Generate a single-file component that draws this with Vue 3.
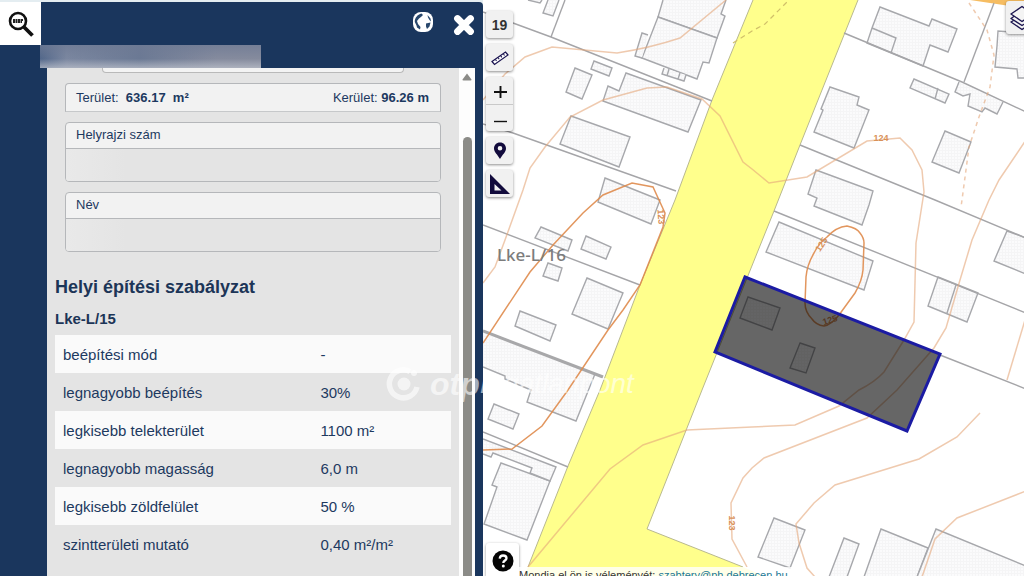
<script setup>
const rules = [
  ['beépítési mód', '-'],
  ['legnagyobb beépítés', '30%'],
  ['legkisebb telekterület', '1100 m²'],
  ['legnagyobb magasság', '6,0 m'],
  ['legkisebb zöldfelület', '50 %'],
  ['szintterületi mutató', '0,40 m²/m²'],
]

const fields = [
  { id: 'parcel-number', label: 'Helyrajzi szám' },
  { id: 'owner-name', label: 'Név' },
]

const buildings = [
  'M528 0L540 3L542 0', 'M548 0L543 13L553 16L559 0',
  'M663 0L658 17L717 38L725 16L721 14L726 0', 'M658 17L642 58L697 79L703 62L709 63L717 38Z',
  'M648 35L642 33L635 56L642 58', 'M664 68L662 74L684 81L686 75M669 69L667 76M680 73L678 79',
  'M594 61L612 68L609 76L591 69Z', 'M575 68L592 75L582 99L566 92Z',
  'M626 73L701 100L688 132L603 101L608 86L619 91Z', 'M571 116L630 137L619 167L560 144Z',
  'M605 178L660 200L651 224L598 202Z', 'M541 227L572 240L568 251L535 238Z',
  'M586 236L611 247L606 259L581 249Z', 'M548 263L562 268L558 281L543 276Z',
  'M587 278L623 293L608 329L572 314Z', 'M520 311L556 325L550 341L515 326Z',
  'M483 331L595 374L576 421L527 402L531 390L505 379L505 376L483 367',
  'M494 404L519 414L513 429L488 419Z', 'M501 463L550 481L527 540L484 524L497 487L492 485Z',
  'M483 439L556 467L550 481L530 473L532 468L493 453L491 457L483 454',
  'M880 7L929 26L932 19L957 29L948 52L930 45L923 66L867 43L872 28Z M872 28L896 38L891 53',
  'M1026 33L998 31L997 46L995 67L1017 69L1018 78H1026', 'M914 79L949 94L945 103L910 88Z M938 88L935 99',
  'M959 82L955 92L963 96L970 94L968 106L982 112L985 108L997 114L1003 102',
  'M830 87L859 97L857 105L869 110L854 148L814 132L823 110L821 109Z',
  'M945 131L971 142L959 173L932 162Z', 'M816 170L873 191L869 205L862 225L814 206L817 198L808 194Z',
  'M779 222L873 261L864 290L766 252Z', 'M938 277L978 293L967 322L928 306Z M956 285L947 313',
  'M1026 238L1007 231L994 261L1026 274', 'M748 297L780 308L772 330L740 318Z',
  'M800 343L815 348L806 373L790 368Z', 'M774 518L805 530L790 568L758 557Z',
  'M829 577L844 538L859 544L847 577', 'M864 577L881 529L928 548L917 577', 'M917 577L936 529L1026 566V577',
]

const boundaries = [
  'M483 12L513 23L551 37L712 101', 'M565 0L551 37', 'M483 124L513 133L676 191', 'M483 225L640 285',
  'M483 432L568 467', 'M844 33L962 82L1026 112', 'M994 3L964 82', 'M800 145L935 200L1026 238',
  'M774 211L1026 313', 'M940 355L1026 389',
]

const contours = [
  'M726 0L680 38Q650 48 617 53L552 47L525 57L505 74L483 100',
  'M483 283L495 267L505 240L523 190L530 168L545 147L570 117L603 100L647 88L667 87L702 99L720 116L743 162L752 169L769 183L807 177L867 141L900 138L912 150L922 170L924 192L916 243L914 322L904 340L884 372Q875 382 859 390L839 406L795 425L752 427L687 430L643 445L610 469L528 567',
  'M1026 140L999 180L989 200L972 240L960 280L946 328L934 348L897 390L867 418L764 458L752 468L743 478L731 503L732 539L747 567',
  'M980 413L957 437L919 459L835 485L814 503L796 524L799 543L807 568L815 577',
  'M1026 491L957 518L935 539L922 577', 'M1025 320L1007 380',
]

const strongContours = [
  'M483 343L530 272L553 245L583 213L603 195L632 183L653 187L659 200L665 213L663 227L640 285L623 310L608 330L568 390L542 426L512 449L483 450',
  'M847 226Q857 228 860 233Q864 238 864 243L863 270Q862 281 855 293L839 315Q831 325 824 326Q816 325 812 319Q805 312 805 303L806 277Q807 265 814 253Q819 243 827 237Q836 227 847 226Z',
]
</script>

<template>
  <div class="app">
    <aside class="panel">
      <header class="panel-head">
        <button class="search" aria-label="Keresés">
          <svg viewBox="0 0 28 28">
            <circle cx="11" cy="11" r="8" fill="#fff" stroke="#111" stroke-width="2.600" />
            <path d="M17 17L25.500 25.500" stroke="#111" stroke-width="3.800" />
            <path d="M6 9h2v4h-2zM8.500 9h2v4h-2zM11 9h2v4h-2zM13.500 9h2.500v2h-1v2h-1.500z" fill="#222" />
          </svg>
        </button>
        <div class="title-mask"></div>
        <div class="head-actions">
          <button class="globe" aria-label="Térkép">
            <svg viewBox="0 0 22 22">
              <rect x="1" y="1" width="20" height="20" rx="8" fill="#fff" />
              <path d="M9.500 2.500C5.500 3.500 2.500 7 2.800 11L4.500 14.500L5 16.500L8 18.500L8.500 16L6 13L5 10L7 7.500L9.500 5.500L11 4ZM15.500 4L18.500 7.500L19 10.500L17.500 9L16 6.500ZM14 12.500L18.500 11.500L17.500 15.500L15 18L14 15.500Z" fill="#28476c" />
            </svg>
          </button>
          <button class="close" aria-label="Bezárás">
            <svg viewBox="0 0 22 22"><path d="M4.500 4.500L17.500 17.500M17.500 4.500L4.500 17.500" stroke="#fff" stroke-width="6.800" stroke-linecap="round" /></svg>
          </button>
        </div>
      </header>

      <div class="panel-body">
        <main class="content">
          <div class="cut-box"></div>
          <section class="measures">
            <span>Terület:&nbsp; <b>636.17 &nbsp;m²</b></span>
            <span>Kerület: <b>96.26 m</b></span>
          </section>
          <section v-for="f in fields" :key="f.id" class="field">
            <label :for="f.id">{{ f.label }}</label>
            <div class="value">
              <input :id="f.id" type="text" readonly />
            </div>
          </section>
          <h2>Helyi építési szabályzat</h2>
          <h3>Lke-L/15</h3>
          <table>
            <tbody>
              <tr v-for="r in rules" :key="r[0]">
                <th scope="row">{{ r[0] }}</th>
                <td>{{ r[1] }}</td>
              </tr>
            </tbody>
          </table>
        </main>
        <div class="scrollbar">
          <svg viewBox="0 0 10 8"><path d="M5 0.500L9.500 6.500Q9.700 7.500 8.500 7.500H1.500Q0.300 7.500 0.500 6.500Z" fill="#8b8b87" /></svg>
          <div class="thumb"></div>
        </div>
      </div>
    </aside>

    <section class="map">
      <svg class="canvas" viewBox="483 0 541 576" preserveAspectRatio="xMinYMin slice">
        <defs>
          <pattern id="hatch" width="3" height="3" patternUnits="userSpaceOnUse">
            <rect width="3" height="3" fill="#fbfbfc" />
            <path d="M0 .5H3M.5 0V3" stroke="#f5f5f6" stroke-width="1" />
          </pattern>
        </defs>
        <path d="M753 0H858L800 145L774 211L702 390L647 529L743 567L766 577H524L528 567L568 466L600 390L640 285L675 200L712 100Z" fill="#ffff8c" />
        <path d="M753 0L712 100L675 200L640 285L600 390L568 466L528 567M858 0L800 145L774 211L702 390L647 529L743 567" class="road-edge" />
        <path d="M970 0L1010 6H1026V0Z" fill="#f6bd62" />
        <path v-for="d in buildings" :key="d" :d="d" class="building" />
        <path v-for="d in boundaries" :key="d" :d="d" class="boundary" />
        <path d="M483 331L603 377" class="thick" />
        <path v-for="d in contours" :key="d" :d="d" class="contour" />
        <path v-for="d in strongContours" :key="d" :d="d" class="contour strong" />
        <path d="M969 3L987 30L994 55L990 87L979 117L969 147L962 200L961 207" class="contour dashed" />
        <path d="M733 43L752 31L765 24L788 1" class="track" />
        <g class="height">
          <text x="881" y="141">124</text>
          <text transform="translate(658 217) rotate(86)">123</text>
          <text transform="translate(824 246) rotate(-58)">125</text>
          <text transform="translate(831 323) rotate(-18)">125</text>
          <text transform="translate(729 523) rotate(90)">123</text>
        </g>
        <text x="497" y="261" class="zone">Lke-L/16</text>
        <path d="M745 277L940 354L907 431L715 352Z" class="parcel" />
      </svg>

      <nav class="tools">
        <button class="tool level">19</button>
        <button class="tool" aria-label="Mérés">
          <svg viewBox="0 0 20 20"><path d="M2 13.500L15.500 4L18 7L4.500 16.500Z" fill="#fff" stroke="#19124f" stroke-width="1.200" /><path d="M5.500 11.500L6.500 13M8.200 9.700L9.200 11.200M10.800 7.900L11.800 9.400M13.500 6L14.500 7.500" stroke="#19124f" stroke-width="1.100" /></svg>
        </button>
        <div class="zoom">
          <button aria-label="Nagyítás"><svg viewBox="0 0 20 20"><path d="M4 11H17M10.500 5V17" stroke="#111" stroke-width="1.900" /></svg></button>
          <button aria-label="Kicsinyítés"><svg viewBox="0 0 20 20"><path d="M4 13.500H17" stroke="#111" stroke-width="1.400" /></svg></button>
        </div>
        <button class="tool" aria-label="Hely">
          <svg viewBox="0 0 20 20"><path d="M10 1.500C6.300 1.500 4 4.200 4 7.500C4 11 7.500 13.500 10 18C12.500 13.500 16 11 16 7.500C16 4.200 13.700 1.500 10 1.500ZM10 5A2.300 2.300 0 1 1 10 9.600A2.300 2.300 0 1 1 10 5Z" fill="#120b3c" fill-rule="evenodd" /></svg>
        </button>
        <button class="tool" aria-label="Szögmérő">
          <svg viewBox="0 0 20 20"><path d="M0 0V20H20ZM4.500 10L11.500 16.500H4.500Z" fill="#120b3c" fill-rule="evenodd" /></svg>
        </button>
      </nav>

      <button class="layers" aria-label="Rétegek">
        <svg viewBox="0 0 26 26"><g fill="#f4f4f4" stroke="#1c1650" stroke-width="1.400" stroke-linejoin="round"><path d="M2 17L7 14L19 14L24 17L13 24.500Z" /><path d="M2 13.500L7 10L19 10L24 13.500L13 20.500Z" /><path d="M2 9L13 1.500L24 9L13 16.500Z" /></g></svg>
      </button>

      <button class="help" aria-label="Súgó">
        <svg viewBox="0 0 22 22"><circle cx="11" cy="11" r="10.500" fill="#050505" /><path d="M7.700 8.700C7.900 6.500 9.200 5.500 11.100 5.500C13.100 5.500 14.500 6.600 14.500 8.300C14.500 10.600 11.300 10.500 11.300 13" fill="none" stroke="#fff" stroke-width="2.300" /><circle cx="11.300" cy="16" r="1.500" fill="#fff" /></svg>
      </button>

      <footer class="notice">Mondja el ön is véleményét: <a href="mailto:szabtery@ph.debrecen.hu">szabtery@ph.debrecen.hu</a></footer>
    </section>

    <div class="watermark">
      <svg viewBox="0 0 36 36"><path d="M24 5.500A14 14 0 1 0 31 21" fill="none" stroke="#fff" stroke-width="5.500" /><circle cx="18" cy="18" r="6.500" fill="#fff" /><circle cx="28" cy="7" r="3" fill="#fff" /></svg>
      <b>otp</b><span>Ingatlanpont</span>
    </div>
  </div>
</template>

<style>
body {
  overflow: hidden;
}
</style>

<style scoped>
* {
  box-sizing: border-box;
}

.app {
  position: relative;
  display: flex;
  height: 100vh;
  overflow: hidden;
  background: #e4edf1;
  color: #1d3960;
  font-family: "Liberation Sans", Arial, sans-serif;
}

button {
  padding: 0;
  border: 0;
  background: none;
  font: inherit;
  color: inherit;
}

svg {
  display: block;
}

.panel {
  flex: 0 0 483px;
  display: flex;
  flex-direction: column;
  margin-top: 2px;
  border-top-right-radius: 4px;
  background: #1a365d;
}

.panel-head {
  position: relative;
  flex: 0 0 66px;
  display: flex;
  justify-content: space-between;
  align-items: flex-start;
}

.search {
  display: grid;
  place-items: center;
  width: 41px;
  height: 43px;
  background: #fff;
}

.search svg {
  width: 28px;
  height: 28px;
}

.title-mask {
  position: absolute;
  left: 40px;
  bottom: 0;
  width: 221px;
  height: 23px;
  background:
    linear-gradient(180deg, rgba(110, 122, 148, 0.7), rgba(130, 138, 158, 0) 60%, rgba(190, 194, 204, 0.7)),
    linear-gradient(90deg, #52678a, #7b87a0 12%, #6b7994 45%, #858b9e 80%, #858b9d);
}

.head-actions {
  display: flex;
  gap: 19px;
  padding: 9px 8px 0 0;
}

.globe,
.close,
.head-actions svg {
  width: 22px;
  height: 22px;
}

.close {
  margin: 3px 0 0;
}

.panel-body {
  flex: 1;
  display: flex;
  min-height: 0;
  padding: 0 8px 0 47px;
}

.content {
  flex: 1;
  overflow: hidden;
  padding: 0 8px;
  background: #e4e4e4;
}

.cut-box {
  height: 5px;
  margin: 0 47px;
  border: 1px solid #b9b9b9;
  border-top: 0;
  border-radius: 0 0 4px 4px;
  background: #f3f3f3;
}

.measures,
.field {
  margin: 10px 10px 0;
  border: 1px solid #b5b7ba;
  border-radius: 4px;
  background: #f2f2f2;
  font-size: 13px;
}

.measures {
  display: flex;
  justify-content: space-between;
  height: 29px;
  padding: 0 11px 0 10px;
  border-bottom-color: #c6c8ca;
  border-radius: 4px 4px 0 0;
  line-height: 27px;
}

.field {
  overflow: hidden;
}

.field label {
  display: block;
  height: 26px;
  padding: 0 10px;
  border-bottom: 1px solid #b5b7ba;
  line-height: 23px;
}

.value {
  height: 32px;
  background: linear-gradient(90deg, #e9e9e9, #e4e4e4 60px);
}

.value input {
  display: block;
  width: 100%;
  height: 100%;
  padding: 0 10px;
  border: 0;
  background: transparent;
  font: inherit;
  color: inherit;
}

h2,
h3 {
  margin: 0;
  color: #1c3557;
}

h2 {
  margin-top: 23px;
  font-size: 18px;
  line-height: 24px;
}

h3 {
  margin-top: 8px;
  font-size: 15px;
  line-height: 24px;
}

table {
  width: 100%;
  margin-top: 4px;
  border-collapse: collapse;
  font-size: 15px;
  text-align: left;
}

tr:nth-child(odd) {
  background: #fafafa;
}

th,
td {
  height: 38px;
  padding: 0 8px;
  font-weight: normal;
}

th {
  width: 65%;
}

.scrollbar {
  flex: 0 0 16px;
  display: flex;
  flex-direction: column;
  align-items: center;
  gap: 56px;
  padding-top: 5px;
  background: #fdfdfd;
}

.scrollbar svg {
  width: 10px;
  height: 8px;
}

.thumb {
  flex: 1;
  width: 9px;
  border-radius: 5px 5px 0 0;
  background: #8b8b87;
}

.map {
  position: relative;
  flex: 1;
  overflow: hidden;
  background: #fff;
}

.canvas {
  width: 100%;
  height: 100%;
}

.building {
  fill: url(#hatch);
  stroke: #a7a8ac;
  stroke-width: 1.4;
}

.boundary,
.road-edge,
.thick,
.contour,
.track {
  fill: none;
}

.boundary {
  stroke: #a5a5a8;
  stroke-width: 1.4;
}

.thick {
  stroke: #a8a8aa;
  stroke-width: 3;
}

.road-edge {
  stroke: #b9b98f;
  stroke-width: 1;
}

.contour {
  stroke: #e5a679;
  stroke-opacity: 0.6;
  stroke-width: 1.5;
}

.contour.strong {
  stroke: #df8b4d;
  stroke-opacity: 0.9;
}

.contour.dashed {
  stroke-dasharray: 4 4;
}

.track {
  stroke: #d0bf69;
  stroke-width: 1.2;
  stroke-dasharray: 5 4;
}

.height text {
  font-size: 9px;
  font-weight: bold;
  text-anchor: middle;
  fill: #d99159;
}

.zone {
  font-family: "Noto Sans", sans-serif;
  font-size: 17px;
  font-weight: 500;
  fill: #7c7c7c;
}

.parcel {
  fill: rgba(0, 0, 0, 0.6);
  stroke: #1b1ba3;
  stroke-width: 3;
}

.tools {
  position: absolute;
  top: 11px;
  left: 3px;
  display: flex;
  flex-direction: column;
  gap: 6px;
  width: 27px;
}

.tool,
.zoom,
.layers,
.help {
  border-radius: 3px;
  background: #f1f1f1;
  box-shadow: 0 1px 3px rgba(0, 0, 0, 0.45);
}

.tool,
.zoom button {
  display: grid;
  place-items: center;
  width: 27px;
  height: 27px;
}

.zoom button + button {
  border-top: 1px solid #c9c9c9;
}

.level {
  font-size: 14px;
  font-weight: bold;
  color: #333;
}

.tools svg {
  width: 20px;
  height: 20px;
}

.layers {
  position: absolute;
  top: 1px;
  right: -15px;
  width: 33px;
  height: 33px;
  padding: 0 0 0 3px;
}

.layers svg {
  width: 26px;
  height: 26px;
}

.help {
  position: absolute;
  bottom: -2px;
  left: 3px;
  display: grid;
  place-items: center;
  width: 33px;
  height: 35px;
  background: #fff;
}

.help svg {
  width: 22px;
  height: 22px;
}

.notice {
  position: absolute;
  bottom: -8px;
  left: 36px;
  height: 17px;
  padding-right: 6px;
  background: rgba(255, 255, 255, 0.8);
  color: #333;
  font-size: 11px;
  line-height: 17px;
  white-space: nowrap;
}

.notice a {
  color: #1b7896;
  text-decoration: none;
}

.watermark {
  position: absolute;
  top: 366px;
  left: 386px;
  display: flex;
  align-items: center;
  height: 36px;
  color: #fff;
  font-size: 32px;
  font-style: italic;
  opacity: 0.6;
  pointer-events: none;
}

.watermark svg {
  width: 36px;
  height: 36px;
  margin-right: 8px;
}

.watermark span {
  font-size: 28px;
}
</style>
